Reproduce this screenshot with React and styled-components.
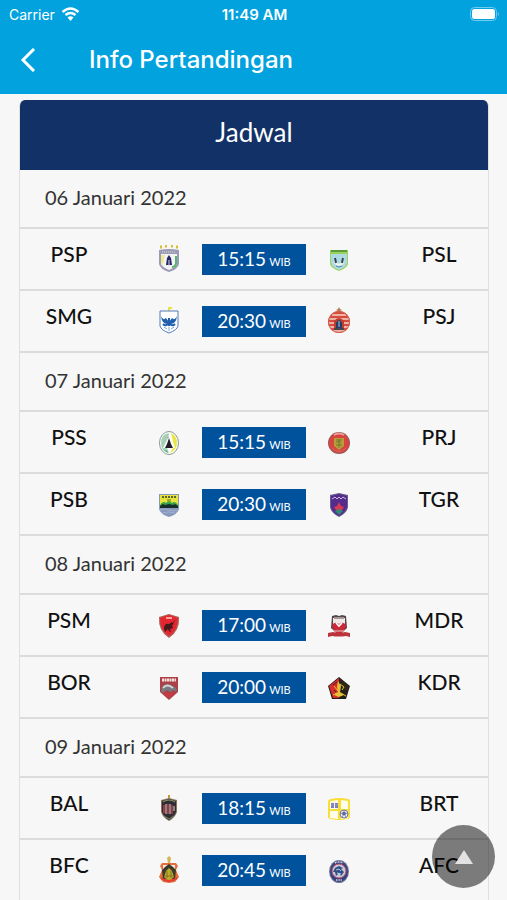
import React from "react";
import styled, { createGlobalStyle } from "styled-components";

const GlobalStyle = createGlobalStyle`
  * {
    box-sizing: border-box;
  }
  html {
    scrollbar-width: none;
  }
  body {
    margin: 0;
    background: #f7f7f7;
    font-family: Lato, "Liberation Sans", sans-serif;
  }
`;

const Header = styled.header`
  position: sticky;
  top: 0;
  z-index: 1;
  color: white;
  background: #02a2df;
  font-family: Inter, "Liberation Sans", sans-serif;
`;

const StatusBar = styled.div`
  display: grid;
  grid-template-columns: 1fr auto 1fr;
  align-items: center;
  height: 28px;
  padding: 0 7px 0 9px;
  font-size: 14px;
`;

const Carrier = styled.div`
  display: flex;
  align-items: center;
  gap: 6px;
`;

const Clock = styled.time`
  font-size: 15px;
  font-weight: 600;
`;

const Battery = styled.svg`
  justify-self: end;
`;

const NavBar = styled.nav`
  display: flex;
  align-items: center;
  height: 66px;
  padding: 0 16px 2px;
  gap: 49px;
`;

const BackButton = styled.button`
  display: flex;
  padding: 4px;
  border: 0;
  color: inherit;
  background: none;
`;

const Title = styled.h1`
  margin: 0;
  font-size: 24px;
  line-height: 32px;
  font-weight: 500;
`;

const Content = styled.main`
  padding: 6px 18px 6px 19px;
`;

const Schedule = styled.table`
  width: 100%;
  table-layout: fixed;
  border-collapse: separate;
  border-spacing: 0;
  border: 1px solid #e0e0e0;
  border-top: 0;
  border-radius: 6px 6px 0 0;
  overflow: hidden;
`;

const CrestCol = styled.col`
  width: 62px;
`;

const TimeCol = styled.col`
  width: 108px;
`;

const ScheduleTitle = styled.th`
  height: 70px;
  padding: 0 0 6px;
  color: white;
  background: #123166;
  font-size: 26px;
  line-height: 32px;
  font-weight: 400;
`;

const DateCell = styled.th`
  height: 59px;
  padding: 0 25px 4px;
  border-bottom: 2px solid #dcdcdc;
  color: #333;
  font-size: 20px;
  line-height: 24px;
  font-weight: 400;
  text-align: left;
`;

const Cell = styled.td`
  height: 62px;
  padding: 0;
  border-bottom: 2px solid #dcdcdc;
  text-align: center;
`;

const TeamCell = styled(Cell)`
  padding: ${({ $away }) => ($away ? "0 0 10px 20px" : "0 20px 10px 0")};
  color: #111;
  font-size: 21px;
  line-height: 24px;
  font-weight: 500;
`;

const Kickoff = styled.div`
  display: flex;
  align-items: baseline;
  justify-content: center;
  gap: 3px;
  height: 31px;
  margin: 0 2px;
  color: white;
  background: #00529c;
  font-size: 19px;
  line-height: 29px;
`;

const Zone = styled.span`
  font-size: 11px;
`;

const CrestSvg = styled.svg`
  display: block;
  margin: 0 auto;
`;

const ToTop = styled.button`
  position: fixed;
  right: 12px;
  bottom: 12px;
  display: flex;
  align-items: center;
  justify-content: center;
  width: 63px;
  height: 63px;
  padding: 0;
  border: 0;
  border-radius: 50%;
  background: rgba(0, 0, 0, 0.5);
`;

const crests = {
  PSP: (
    <>
      <path d="M3 2h2M8 1h2M14 1h2M19 2h2" stroke="#d9bd32" strokeWidth="3" />
      <path d="M2 5q10-2 20 0v14q-1 5-10 8Q3 24 2 19z" fill="#9b9bb5" />
      <path d="M4 9h16v10q-1 3-8 6-7-3-8-6z" fill="#f4f4f2" />
      <path d="M4 10h4l-2 10q-2-1-2-3z" fill="#ece996" />
      <path d="M19 11v8q-1 3-4 3" fill="none" stroke="#58b56f" strokeWidth="2" />
      <path d="M12 10l2 3 1 7H9l1-7z" fill="#25256d" />
      <path d="M12 15v6" stroke="#ddd" />
      <path d="M5 7h14" stroke="#ddd" strokeDasharray="1 1" />
    </>
  ),
  PSL: (
    <>
      <path d="M3 5h18v14q-1 4-9 7-8-3-9-7z" fill="#9ad25b" />
      <path d="M4 9h16v9q-1 4-8 7-7-3-8-7z" fill="#add9e6" />
      <path d="M4 6h16" stroke="#458a35" strokeWidth="1.4" />
      <path d="M8 12q-3 5 1 8l3 1 3-1q4-3 1-8l-1 5-3 2-3-2z" fill="#f2f6e8" />
      <path d="M8 13l1 5M16 13l-1 5" stroke="#344352" strokeWidth="2" />
      <path d="M9 21q3 2 6 0" fill="none" stroke="#4b8aa6" />
    </>
  ),
  SMG: (
    <>
      <path d="M12 0v4M12 1h3" stroke="#e8e342" strokeWidth="2" />
      <path d="M3 4h18v15q-1 4-9 7-8-3-9-7z" fill="#fff" stroke="#5279b8" />
      <path d="M12 17Q5 18 4 9q2 5 5 2l3 4 3-4q3 3 5-2-1 9-8 8z" fill="#205fae" />
      <path d="M6 17q3 3 6-1 3 4 6 1M12 11v8" fill="none" stroke="#205fae" strokeWidth="2" />
      <path d="M7 20l3 2M17 20l-3 2M12 20v4" stroke="#74a8d3" />
    </>
  ),
  PSJ: (
    <>
      <path d="M12 0l1 2 2 1-2 1-1 2-1-2-2-1 2-1z" fill="#b77b4c" />
      <circle cx="12" cy="15" r="11" fill="#d64b3d" />
      <path d="M5 8h14M2 12h20M2 16h20M2 20h20M6 24h12" stroke="#f3d6c9" strokeWidth="1.4" />
      <path d="M7 21v-7q5-6 10 0v7z" fill="#bf3c31" />
      <path d="M9 21v-5q3-6 6 0v5z" fill="#263d67" />
      <path d="M12 14v6" stroke="#89a3bd" strokeWidth="1.4" />
      <path d="M7 22h10" stroke="#494450" strokeWidth="2" />
      <circle cx="12" cy="15" r="10.5" fill="none" stroke="#d2604f" />
    </>
  ),
  PSS: (
    <>
      <ellipse cx="12" cy="15" rx="9.5" ry="11.5" fill="#fff" stroke="#8d9990" />
      <path d="M12 5Q4 6 4 15t8 10l-2-5z" fill="#a4d2b8" />
      <path d="M14 5q6 3 6 10t-7 10l4-7z" fill="#e9e64a" />
      <path d="M12 8l-6 12h12z" fill="#fff" />
      <path d="M12 10l2 6 2 4H8l2-4z" fill="#201f25" />
      <path d="M7 22l3 1 1 2z" fill="#209d5c" />
      <path d="M10 10l2-1" stroke="#d78884" />
    </>
  ),
  PRJ: (
    <>
      <circle cx="12" cy="15" r="11" fill="#9a5b52" />
      <circle cx="12" cy="15" r="10" fill="#d94342" />
      <path d="M7 7q5-3 10 0" fill="none" stroke="#eea19a" strokeWidth="2" />
      <path d="M7 10h10v8l-5 4-5-4z" fill="#b4a034" />
      <path d="M9 12h6M9 17h6M12 11v9M9 14h5" stroke="#5b6939" strokeWidth=".7" />
      <path d="M5 20q7 7 14 0" fill="none" stroke="#d36b5d" />
    </>
  ),
  PSB: (
    <>
      <path d="M2 4h20v15q-1 5-10 8Q3 24 2 19z" fill="#8899bd" />
      <path d="M3 5h18v10H3z" fill="#e7e338" />
      <path d="M5 7h14" stroke="#5a6536" strokeWidth="2" strokeDasharray="2 1" />
      <path d="M10 10h4" stroke="#6a6c32" />
      <path d="M3 15q3-5 6-2 3-4 6 0 3-3 6 2v2H3z" fill="#39a44a" />
      <path d="M3 16l3-2 2 1 4-1 4 1 2-1 3 2v2H3z" fill="#172e2a" />
      <path d="M3 20q4-2 9 0t8 0M5 23q6-2 13 0" fill="none" stroke="#acbadb" strokeWidth=".7" />
    </>
  ),
  TGR: (
    <>
      <path d="M3 5l9-2 9 2v12q-1 6-9 10-8-4-9-10z" fill="#665e8d" />
      <path d="M4 6l8-2 8 2v11q-1 5-8 9-7-4-8-9z" fill="#562b8e" />
      <path d="M5 9l3-2 2 2 2-2 2 2 2-2 3 2" fill="none" stroke="#c9bed7" />
      <path d="M7 17l3-1 2-4 2 4 3 1-2 3H9z" fill="#d83a51" />
      <path d="M8 21l4-2 4 2-4 4z" fill="#318a72" />
    </>
  ),
  PSM: (
    <>
      <path d="M2 6l10-3 10 3q1 14-10 21Q1 20 2 6z" fill="#ad6055" />
      <path d="M3 7l9-3 9 3q0 12-9 18Q3 19 3 7z" fill="#e52631" />
      <path d="M9 7h6" stroke="#f6a49d" strokeWidth="2" />
      <path d="M7 18q0-6 5-5l3-2 2 2-2 1 1 3-3 1 1 3-2-1-1-2-3 3z" fill="#47191b" />
      <path d="M16 12l2-3" stroke="#7b2020" />
    </>
  ),
  MDR: (
    <>
      <path d="M5 5l4-1 3 1 3-1 4 1 1 12-8 7-8-7z" fill="#51464a" />
      <path d="M6 7h12v8l-6 6-6-6z" fill="#eee9e7" />
      <path d="M7 7h10" stroke="#a49596" strokeWidth="2" />
      <path d="M5 14q3-4 7-1 4-3 7 1-1 6-4 8H9q-3-2-4-8z" fill="#c92939" />
      <path d="M9 12l3 3 3-3" fill="none" stroke="#fff" strokeWidth="1.6" />
      <path d="M1 22l5-1q6 2 12 0l5 1v4l-4-1q-7 1-14 0l-4 1z" fill="#bb343b" />
      <path d="M7 20h10" stroke="#ded1ce" />
    </>
  ),
  BOR: (
    <>
      <path d="M3 4h18v15l-9 8-9-8z" fill="#ab4149" />
      <path d="M4 5h16v4H4z" fill="#b93c44" />
      <path d="M5 7h14" stroke="#f0e4e1" strokeWidth="3" strokeDasharray="2 .5" />
      <path d="M4 18q1-8 8-7l7 4 1 4-4-2-2 2-4-2-4 3z" fill="#77797e" />
      <path d="M6 15q4-5 10 0" fill="none" stroke="#d5d3d6" strokeWidth="2" />
      <path d="M6 20h12l-6 5z" fill="#ca3843" />
    </>
  ),
  KDR: (
    <>
      <path d="M12 4l11 9-4 13H5L1 13z" fill="#242018" />
      <path d="M12 5v20H6L2 13z" fill="#d92d2c" />
      <path d="M13 6l9 7-2 5-5-4z" fill="#302515" />
      <path d="M11 8l3 5-1 6 4 3-5 2-5-2 4-3-1-5z" fill="#e3c138" />
      <path d="M7 13l4 5M13 11l4 3-2 3M6 22l4-2M14 20l5 3" fill="none" stroke="#e6bf2f" />
      <path d="M6 12l4-3M7 17l2 2" stroke="#3d2824" />
    </>
  ),
  BAL: (
    <>
      <path d="M12 1v5" stroke="#c1983e" strokeWidth="2" />
      <path d="M4 6l8-2 8 2v12q-2 6-8 9-6-3-8-9z" fill="#85765d" />
      <path d="M5 7l7-2 7 2v11q-2 5-7 8-5-3-7-8z" fill="#302e34" />
      <path d="M6 8q6-4 12 0" fill="none" stroke="#8c9c65" />
      <path d="M7 11v8M11 10v10M15 11v9" stroke="#bd404b" strokeWidth="1.4" />
      <path d="M9 10v10M13 10v10M17 12v5" stroke="#ded5cd" />
      <path d="M7 22l5 3 5-3" fill="none" stroke="#758562" />
    </>
  ),
  BRT: (
    <>
      <path d="M4 5q8-2 17 0 2 0 2 3v14q0 3-3 3-8 2-16 0-3 0-3-3V8q0-3 3-3z" fill="#f8de38" />
      <path d="M4 7l7-1v9H3V8zM14 6l7 1v8h-7zM3 17h8v8l-8-1zM14 17h7v7l-7 1z" fill="#fffce9" />
      <path d="M4 9h3v5H4zM8 9h3v5H8z" fill="#7d80b8" />
      <path d="M4 11h7" stroke="#a7a9d2" strokeWidth=".6" />
      <circle cx="17" cy="20" r="4" fill="#eceef1" stroke="#777baa" />
      <path d="M17 18l2 1-1 2h-2l-1-2zM17 16v2M13 20l2-1M21 20l-2-1M16 21l-1 3M18 21l1 3" fill="#5b6195" stroke="#5b6195" strokeWidth=".6" />
    </>
  ),
  BFC: (
    <>
      <path d="M12 0l2 2-1 5h-2l-1-5z" fill="#d4b656" />
      <path d="M5 7h14l2 3-2 4 3 7-4 5-6 1-6-1-4-5 3-7-2-4z" fill="#e36f3e" />
      <path d="M6 9h12v6H6z" fill="#f2eadb" />
      <path d="M5 14l3-3 4-3 4 3 3 3-1 9H6z" fill="#3c392b" />
      <path d="M9 15l3-3 3 3 2 6-5 4-5-4z" fill="#baae2d" />
      <path d="M10 15v7M14 15v7M7 20h10" stroke="#755b24" strokeWidth=".7" />
      <path d="M4 22q8 6 16 0" fill="none" stroke="#e43e31" strokeWidth="2" />
    </>
  ),
  AFC: (
    <>
      <ellipse cx="12" cy="15.5" rx="10" ry="11.5" fill="#747b9b" />
      <ellipse cx="12" cy="15.5" rx="9" ry="10.5" fill="#343f7d" />
      <circle cx="12" cy="15" r="7" fill="#c1cbdc" stroke="#c94b62" />
      <path d="M6 16l2-4 4-2 4 2-2 1 3 3-3 4-2-3-3 3-1-4z" fill="#315086" />
      <path d="M9 14l3-1 2 2M10 17l4 1" fill="none" stroke="#f2f3f5" strokeWidth=".7" />
      <path d="M8 7q4-2 8 0M9 24h6" fill="none" stroke="#d9dbe8" strokeWidth="1.5" strokeDasharray="1 .6" />
    </>
  ),
};

const schedule = [
  {
    date: "06 Januari 2022",
    matches: [
      { home: "PSP", time: "15:15", away: "PSL" },
      { home: "SMG", time: "20:30", away: "PSJ" },
    ],
  },
  {
    date: "07 Januari 2022",
    matches: [
      { home: "PSS", time: "15:15", away: "PRJ" },
      { home: "PSB", time: "20:30", away: "TGR" },
    ],
  },
  {
    date: "08 Januari 2022",
    matches: [
      { home: "PSM", time: "17:00", away: "MDR" },
      { home: "BOR", time: "20:00", away: "KDR" },
    ],
  },
  {
    date: "09 Januari 2022",
    matches: [
      { home: "BAL", time: "18:15", away: "BRT" },
      { home: "BFC", time: "20:45", away: "AFC" },
    ],
  },
];

const Crest = ({ team }) => (
  <CrestSvg width="24" height="28" viewBox="0 0 24 28" aria-hidden="true">
    {crests[team]}
  </CrestSvg>
);

const MatchRow = ({ home, time, away }) => (
  <tr>
    <TeamCell>{home}</TeamCell>
    <Cell>
      <Crest team={home} />
    </Cell>
    <Cell>
      <Kickoff>
        {time}
        <Zone>WIB</Zone>
      </Kickoff>
    </Cell>
    <Cell>
      <Crest team={away} />
    </Cell>
    <TeamCell $away>{away}</TeamCell>
  </tr>
);

const App = () => {
  return (
    <>
      <GlobalStyle />
      <Header>
        <StatusBar>
          <Carrier>
            Carrier
            <svg width="19" height="14" viewBox="0 0 18 14" aria-hidden="true">
              <path
                d="M1 5q8-7 16 0M4 8q5-4 10 0"
                fill="none"
                stroke="white"
                strokeWidth="2.4"
              />
              <path d="M6 10.5q3-2.4 6 0L9 14z" fill="white" />
            </svg>
          </Carrier>
          <Clock>11:49 AM</Clock>
          <Battery width="30" height="14" viewBox="0 0 30 14" aria-hidden="true">
            <rect x=".5" y=".5" width="26" height="13" rx="4" fill="none" stroke="#71cbee" />
            <rect x="2" y="2" width="23" height="10" rx="2.5" fill="white" />
            <path d="M28 5q2 2 0 4z" fill="#71cbee" />
          </Battery>
        </StatusBar>
        <NavBar>
          <BackButton type="button" aria-label="Kembali">
            <svg width="16" height="24" viewBox="0 0 16 24" aria-hidden="true">
              <path d="M14 1L3 12l11 11" fill="none" stroke="white" strokeWidth="3" />
            </svg>
          </BackButton>
          <Title>Info Pertandingan</Title>
        </NavBar>
      </Header>
      <Content>
        <Schedule>
          <colgroup>
            <col />
            <CrestCol />
            <TimeCol />
            <CrestCol />
            <col />
          </colgroup>
          <thead>
            <tr>
              <ScheduleTitle colSpan={5}>Jadwal</ScheduleTitle>
            </tr>
          </thead>
          {schedule.map(({ date, matches }) => (
            <tbody key={date}>
              <tr>
                <DateCell colSpan={5} scope="rowgroup">
                  {date}
                </DateCell>
              </tr>
              {matches.map((match) => (
                <MatchRow key={match.home} {...match} />
              ))}
            </tbody>
          ))}
        </Schedule>
      </Content>
      <ToTop
        type="button"
        aria-label="Kembali ke atas"
        onClick={() => window.scrollTo({ top: 0, behavior: "smooth" })}
      >
        <svg width="18" height="14" viewBox="0 0 18 14" aria-hidden="true">
          <path d="M9 0l9 14H0z" fill="#e2e2e2" />
        </svg>
      </ToTop>
    </>
  );
};

export default App;
